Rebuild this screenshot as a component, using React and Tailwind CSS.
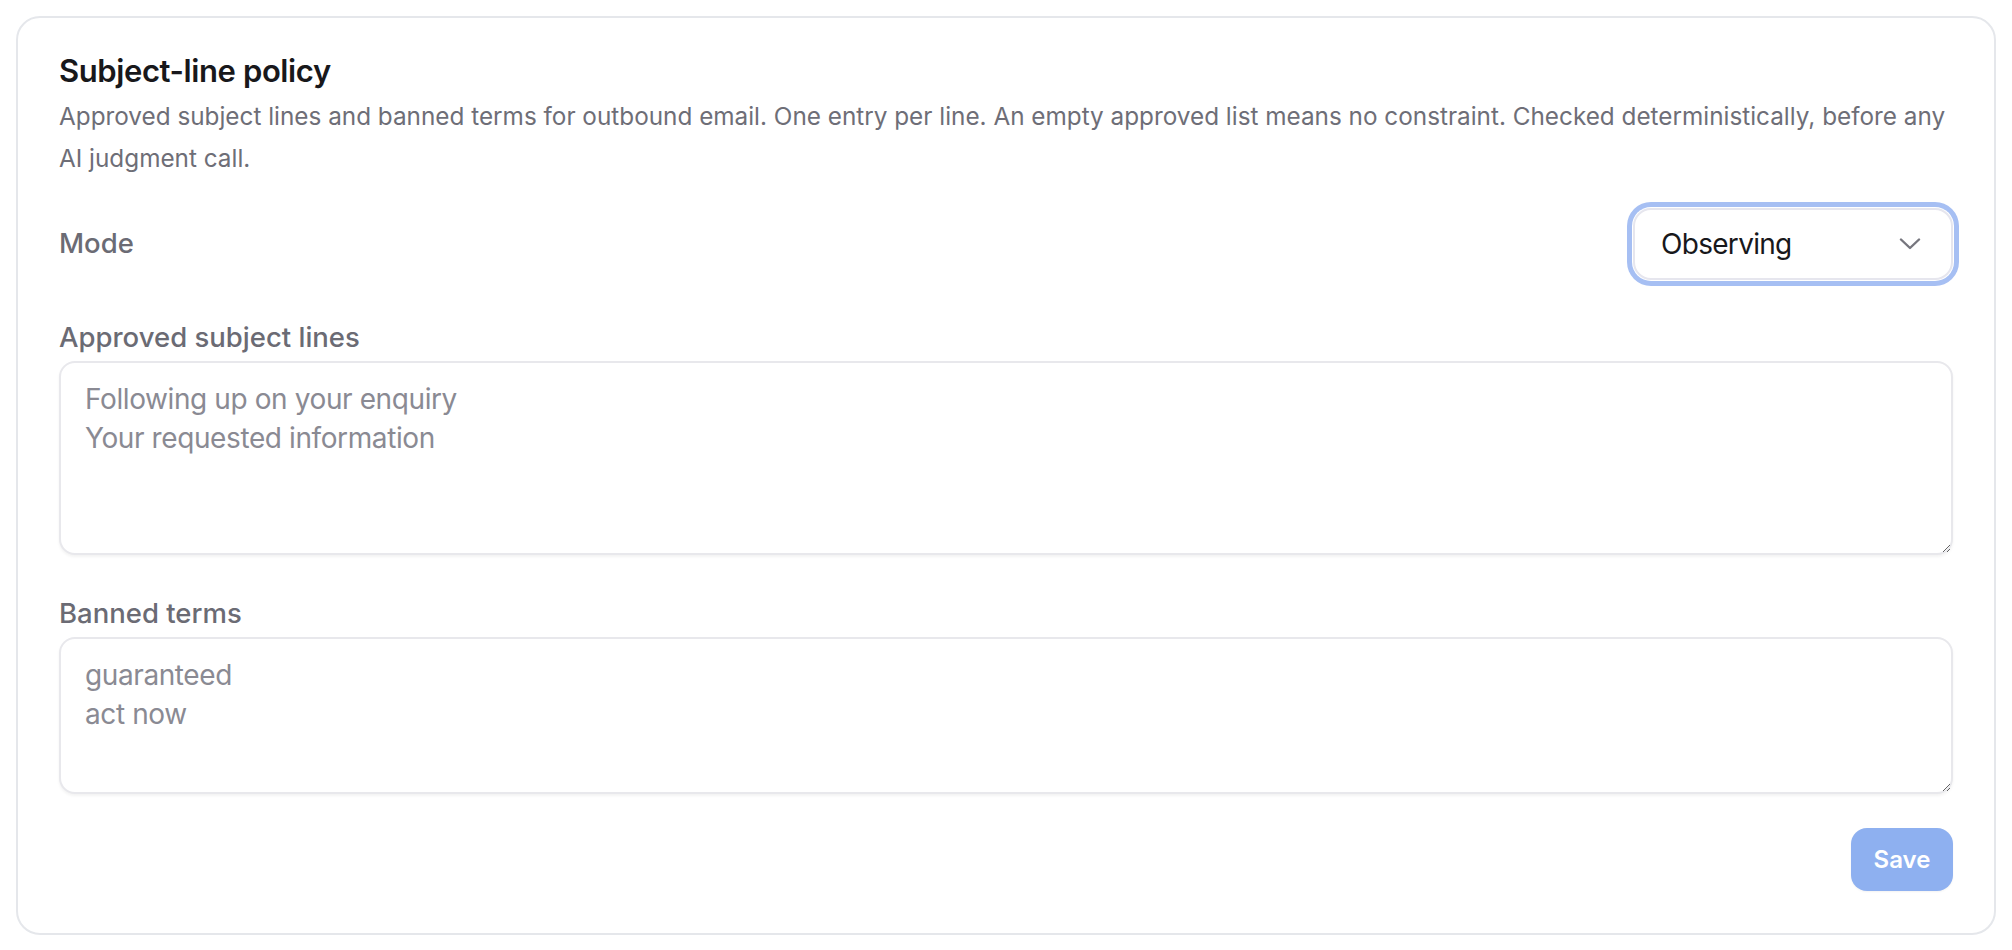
import { useState } from "react";

const fieldLabel = "block text-[27.5px] leading-[36px] font-medium text-[#6b6b74] mb-[6px]";
const areaClass =
    "block w-full resize-y rounded-[16px] border-2 border-[#e8e8ec] bg-white px-[24px] pt-[17px] text-[28px] leading-[39px] tracking-[-0.4px] text-[#18181b] placeholder:text-[#8a8a93] shadow-[0_2px_3px_rgba(0,0,0,0.05)] outline-none";

const ChevronDown = () => (
    <svg width="22" height="12" viewBox="0 0 22 12" fill="none" className="text-[#76767e]">
        <polyline points="2,1.5 11,10 20,1.5" stroke="currentColor" strokeWidth="2.4" strokeLinecap="round" strokeLinejoin="round" />
    </svg>
);

const SubjectLinePolicy = () => {
    const [approved, setApproved] = useState("");
    const [banned, setBanned] = useState("");

    return (
        <div className="min-h-screen bg-white p-4 font-['Inter',sans-serif]">
            <div className="rounded-[24px] border-2 border-[#e5e7eb] bg-white px-[41px] pt-[33px] pb-[42px]">
                <h2 className="text-[31px] leading-[40px] font-semibold tracking-[-0.4px] text-[#18181b]">Subject-line policy</h2>
                <p className="mt-[4px] text-[24.3px] leading-[42px] text-[#6e6e77]">
                    Approved subject lines and banned terms for outbound email. One entry per line. An empty approved list means no constraint. Checked deterministically, before any AI judgment call.
                </p>

                <div className="mt-[29px] flex items-center justify-between">
                    <span className="text-[27.5px] font-medium text-[#6b6b74]">Mode</span>
                    <button className="flex h-[72px] w-[320px] items-center justify-between rounded-[18px] border-2 border-[#e6e6ee] bg-white pl-[26px] pr-[30px] shadow-[0_0_0_1px_#ffffff,0_0_0_6px_#a6bff3]">
                        <span className="text-[28px] tracking-[-0.7px] text-[#18181b]">Observing</span>
                        <ChevronDown />
                    </button>
                </div>

                <div className="mt-[39px]">
                    <label className={fieldLabel}>Approved subject lines</label>
                    <textarea
                        value={approved}
                        onChange={(e) => setApproved(e.target.value)}
                        placeholder={"Following up on your enquiry\nYour requested information"}
                        className={`${areaClass} h-[194px]`}
                    />
                </div>

                <div className="mt-[40px]">
                    <label className={fieldLabel}>Banned terms</label>
                    <textarea
                        value={banned}
                        onChange={(e) => setBanned(e.target.value)}
                        placeholder={"guaranteed\nact now"}
                        className={`${areaClass} h-[157px]`}
                    />
                </div>

                <div className="mt-[34px] flex justify-end">
                    <button className="h-[63px] w-[102px] rounded-[16px] bg-[#8eb0f0] text-[24px] font-semibold text-white shadow-[0_1px_2px_rgba(0,0,0,0.05)]">
                        Save
                    </button>
                </div>
            </div>
        </div>
    );
};

export default SubjectLinePolicy;
